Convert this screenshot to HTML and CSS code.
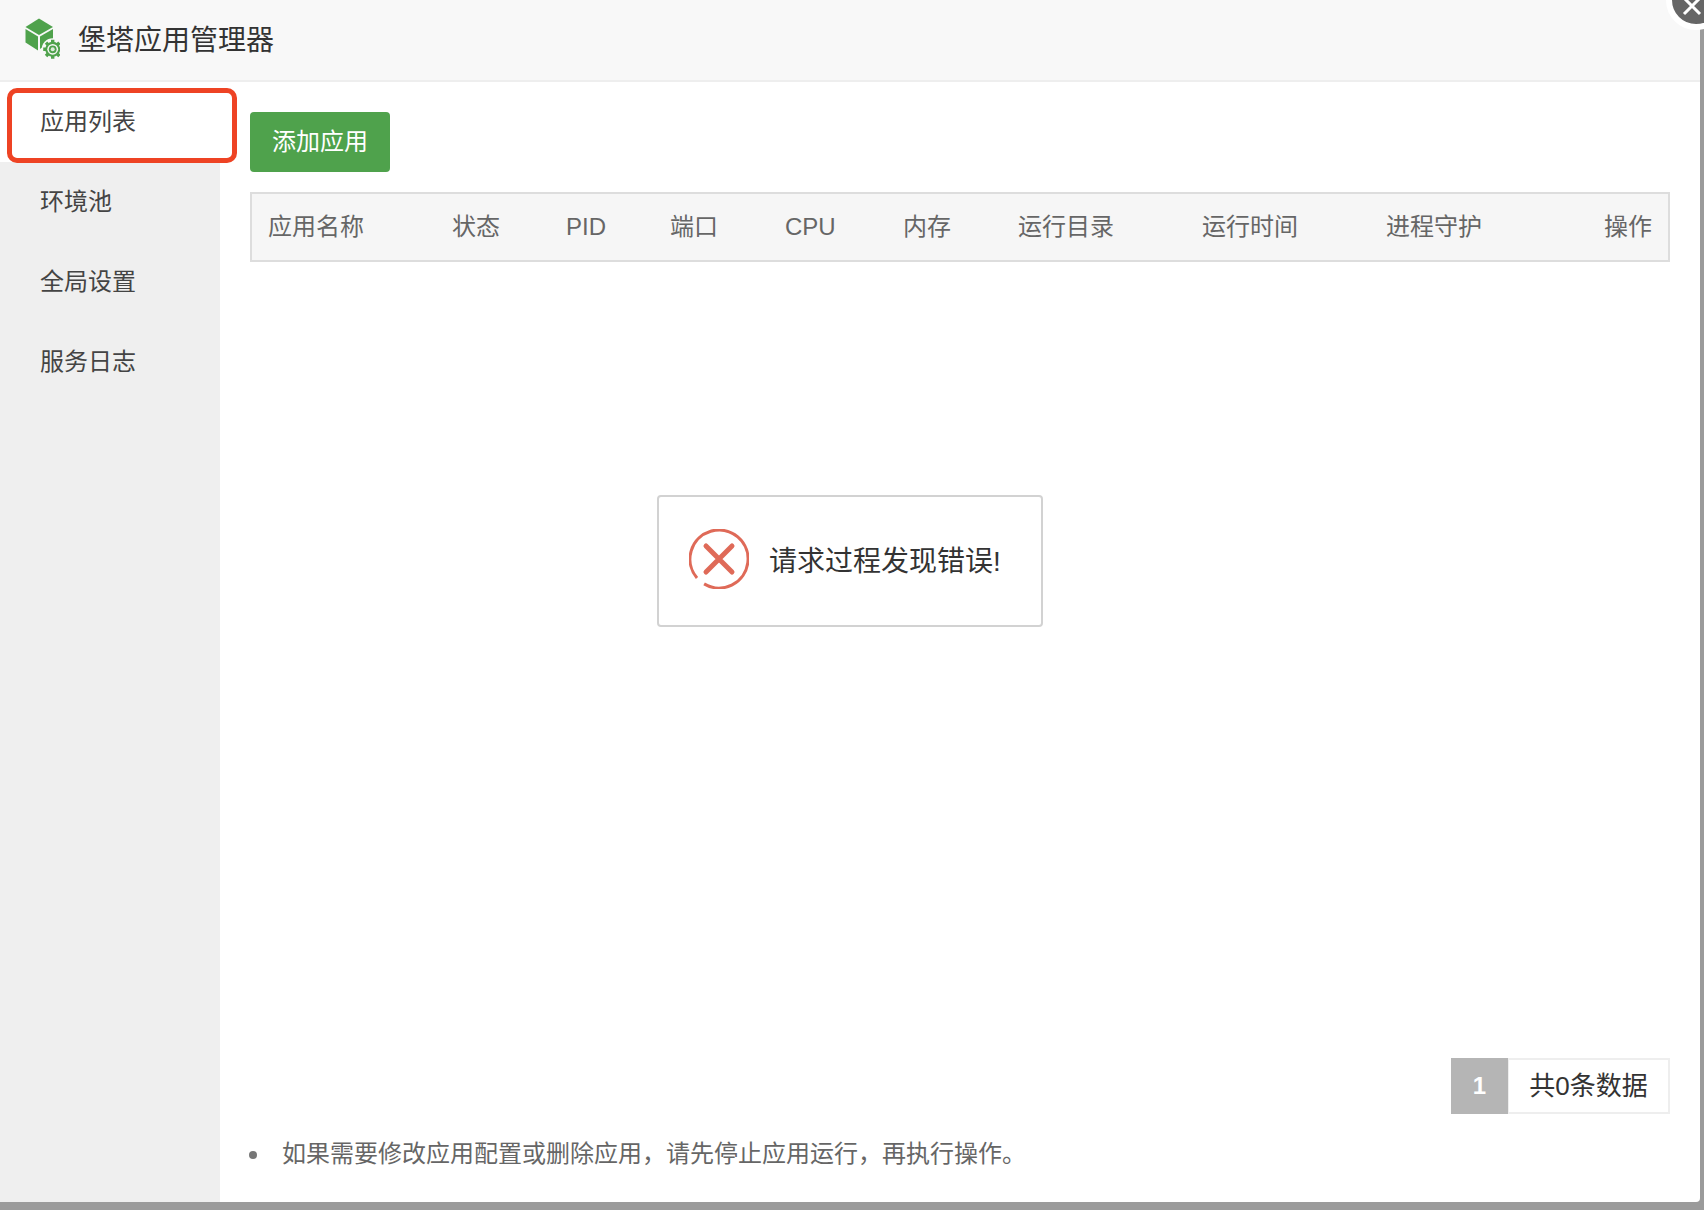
FILE: index.html
```html
<!DOCTYPE html>
<html lang="zh-CN">
<head>
<meta charset="utf-8">
<title>堡塔应用管理器</title>
<link rel="stylesheet" href="styles.css">
</head>
<body>
<div class="modal">
  <header class="modal-head">
    <svg class="logo" viewBox="24 15 36 46" aria-hidden="true">
      <path class="g" d="M39 17.500 53 26 39 34 25.500 26Z"/>
      <path class="g" d="M25.500 28 38 35.500V49.500L25.500 41.500Z"/>
      <path class="g" d="M40 35.500 53 28V38.500L40 48Z"/>
      <circle class="halo" cx="52.700" cy="48.300" r="11"/>
      <g class="teeth">
        <path d="M52.700 38.800V57.800M43.200 48.300H62.200M46 41.600 59.400 55M46 55 59.400 41.600"/>
      </g>
      <circle class="g" cx="52.700" cy="48.300" r="7.500"/>
      <circle class="halo" cx="52.700" cy="48.300" r="5.400"/>
      <circle class="g" cx="52.700" cy="48.300" r="3.900"/>
      <circle class="hole" cx="52.700" cy="48.300" r="2"/>
    </svg>
    <h1 class="title">堡塔应用管理器</h1>
  </header>
  <div class="modal-body">
    <nav class="side">
      <a class="side-item active">应用列表</a>
      <a class="side-item">环境池</a>
      <a class="side-item">全局设置</a>
      <a class="side-item">服务日志</a>
    </nav>
    <main class="main">
      <button class="btn" type="button">添加应用</button>
      <div class="thead">
        <span>应用名称</span><span>状态</span><span>PID</span><span>端口</span><span>CPU</span><span>内存</span><span>运行目录</span><span>运行时间</span><span>进程守护</span><span class="right">操作</span>
      </div>
      <div class="tbody"></div>
      <div class="pager">
        <span class="page-num">1</span><span class="page-total">共0条数据</span>
      </div>
      <ul class="notes">
        <li>如果需要修改应用配置或删除应用，请先停止应用运行，再执行操作。</li>
      </ul>
    </main>
  </div>
  <div class="annot"></div>
  <div class="toast">
    <svg class="toast-icon" viewBox="0 0 60 60" aria-hidden="true">
      <path class="ring" d="M15.100 54.900A29 29 0 1 0 8 48.900"/>
      <path class="cross" d="M17 17 43 43M43 17 17 43"/>
    </svg>
    <span class="toast-text">请求过程发现错误!</span>
  </div>
</div>
<div class="close">
  <svg viewBox="0 0 24 24" aria-hidden="true"><path d="M4 -5 20 11M20 -5 4 11"/></svg>
</div>
</body>
</html>
```
FILE: styles.css
```css
* { box-sizing: border-box; }
html, body { margin: 0; height: 100%; }
body {
  position: relative;
  width: 1704px;
  height: 1210px;
  overflow: hidden;
  background: #9b9b9b;
  font-family: "Liberation Sans", "Noto Sans CJK SC", sans-serif;
  color: #333;
}
.modal {
  position: relative;
  width: 1700px;
  height: 1202px;
  display: flex;
  flex-direction: column;
  background: #fff;
  border-bottom-right-radius: 4px;
  overflow: hidden;
}
.modal-head {
  flex: none;
  height: 82px;
  display: flex;
  align-items: center;
  padding: 0 0 0 24px;
  background: #f8f8f8;
  border-bottom: 2px solid #eee;
}
.logo { width: 36px; height: 46px; margin-top: -2px; flex: none; }
.g { fill: #4fa24c; }
.halo { fill: #f8f8f8; }
.hole { fill: #dcebdb; }
.teeth path { fill: none; stroke: #4fa24c; stroke-width: 3.400; }
.title {
  margin: 2px 0 0 18px;
  font-size: 28px;
  font-weight: 400;
  line-height: 1;
  color: #333;
}
.modal-body { flex: 1; display: flex; min-height: 0; }
.side { flex: none; width: 220px; background: #efefef; }
.side-item {
  display: block;
  height: 80px;
  padding-left: 40px;
  line-height: 80px;
  font-size: 24px;
  color: #444;
}
.side-item.active { background: #fff; }
.main {
  flex: 1;
  min-width: 0;
  display: flex;
  flex-direction: column;
  padding: 30px 30px 0;
}
.btn {
  flex: none;
  width: 140px;
  height: 60px;
  padding: 0;
  border: 0;
  border-radius: 4px;
  background: #4fa24c;
  color: #fff;
  font: inherit;
  font-size: 24px;
  line-height: 60px;
}
.thead {
  flex: none;
  margin-top: 20px;
  height: 70px;
  display: grid;
  grid-template-columns: 184px 114px 104px 115px 118px 115px 184px 184px 183px 1fr;
  align-items: center;
  border: 2px solid #ddd;
  background: #f6f6f6;
  font-size: 24px;
  line-height: 66px;
  color: #666;
}
.thead span { padding-left: 16px; white-space: nowrap; }
.thead .right { padding: 0 16px 0 0; text-align: right; }
.tbody { flex: 1; }
.pager { flex: none; display: flex; justify-content: flex-end; height: 56px; }
.page-num {
  width: 57px;
  background: #b5b5b5;
  color: #fff;
  font-size: 24px;
  font-weight: 700;
  line-height: 56px;
  text-align: center;
}
.page-total {
  width: 162px;
  border: 2px solid #eee;
  border-left-width: 1px;
  font-size: 26px;
  line-height: 52px;
  text-align: center;
  color: #333;
}
.notes {
  flex: none;
  margin: 20px 0 0;
  height: 68px;
  padding: 0;
  list-style: none;
  font-size: 24px;
  line-height: 40px;
  color: #666;
}
.notes li { display: flex; align-items: center; }
.notes li::before {
  content: "";
  flex: none;
  width: 8px;
  height: 8px;
  margin: 2px 25px 0 -1px;
  border-radius: 50%;
  background: #777;
}
.annot {
  position: absolute;
  left: 7px;
  top: 88px;
  width: 230px;
  height: 75px;
  border: 5px solid #ee4324;
  border-radius: 10px;
}
.toast {
  position: absolute;
  left: 657px;
  top: 495px;
  width: 386px;
  height: 132px;
  display: flex;
  align-items: center;
  padding: 0 0 4px 30px;
  background: #fff;
  border: 2px solid #d2d2d2;
  border-radius: 4px;
}
.toast-icon { width: 60px; height: 60px; flex: none; }
.ring { fill: none; stroke: #df6a58; stroke-width: 3; }
.cross { fill: none; stroke: #df6a58; stroke-width: 5; stroke-linecap: round; }
.toast-text { margin: 5px 0 0 20px; font-size: 28px; line-height: 40px; color: #333; white-space: nowrap; }
.close {
  position: absolute;
  left: 1666px;
  top: -30px;
  width: 60px;
  height: 60px;
  border: 6px solid #fff;
  border-radius: 50%;
  background: #666;
  overflow: hidden;
}
.close svg { position: absolute; left: 8px; top: 27px; width: 24px; height: 24px; overflow: visible; }
.close path { fill: none; stroke: #fff; stroke-width: 3; }
```
